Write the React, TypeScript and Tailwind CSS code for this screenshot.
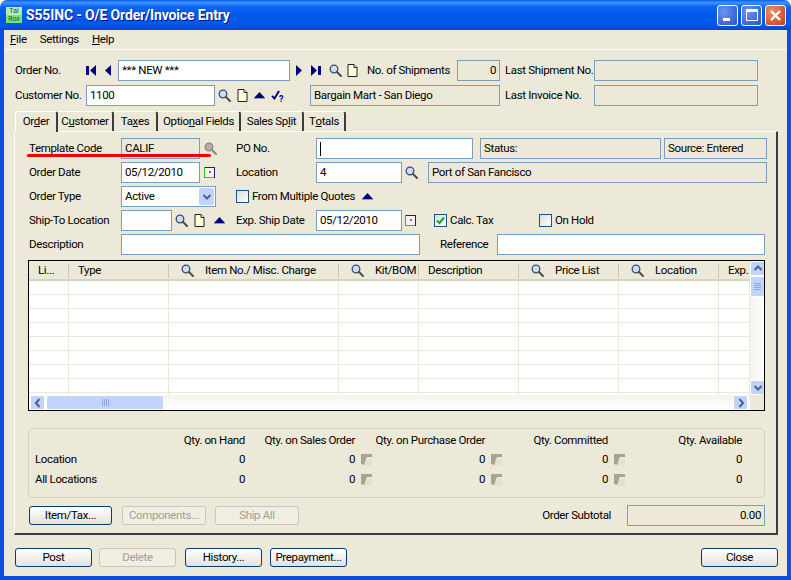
import React from 'react';

const Search = ({ className = '', off = false }: { className?: string; off?: boolean }) => (
  <svg className={`shrink-0 ${className}`} width="13" height="13" viewBox="0 0 13 13">
    <circle cx="5" cy="5" r="3.8" fill={off ? '#b4b2a6' : '#c9dcf8'} stroke={off ? '#8a887c' : '#3d4a66'} strokeWidth="1.3" />
    <path d="M8 8l4 4" stroke={off ? '#8a887c' : '#4b4b4b'} strokeWidth="2" strokeLinecap="round" />
  </svg>
);

const Doc = ({ className = '' }: { className?: string }) => (
  <svg className={`shrink-0 ${className}`} width="11" height="13" viewBox="0 0 11 13">
    <path d="M1 .5h6l3 3v9H1z" fill="#ffffd8" stroke="#222" />
    <path d="M7 .5v3h3" fill="#fff" stroke="#222" />
  </svg>
);

const UpTri = ({ className = '' }: { className?: string }) => (
  <svg className={`shrink-0 ${className}`} width="11" height="7" viewBox="0 0 11 7">
    <path d="M5.5 0l5.5 6H0z" fill="#000080" />
    <path d="M0 6.5h11" stroke="#8f9bb5" />
  </svg>
);

const First = ({ className = '' }: { className?: string }) => (
  <svg className={`shrink-0 ${className}`} width="11" height="11" viewBox="0 0 11 11">
    <path d="M0 1h3v9H0z" fill="#000080" />
    <path d="M10 0v11L4 5.5z" fill="#000080" />
  </svg>
);

const Prev = ({ className = '' }: { className?: string }) => (
  <svg className={`shrink-0 ${className}`} width="7" height="11" viewBox="0 0 7 11">
    <path d="M7 0v11L1 5.5z" fill="#000080" />
  </svg>
);

const Next = ({ className = '' }: { className?: string }) => (
  <svg className={`shrink-0 ${className}`} width="7" height="11" viewBox="0 0 7 11">
    <path d="M0 0v11l6-5.5z" fill="#000080" />
  </svg>
);

const Last = ({ className = '' }: { className?: string }) => (
  <svg className={`shrink-0 ${className}`} width="11" height="11" viewBox="0 0 11 11">
    <path d="M0 0v11l6-5.5z" fill="#000080" />
    <path d="M7 1h3v9H7z" fill="#000080" />
  </svg>
);

const CheckHelp = ({ className = '' }: { className?: string }) => (
  <svg className={`shrink-0 ${className}`} width="13" height="13" viewBox="0 0 13 13">
    <path d="M1 7l2.5 2.5L8 2" fill="none" stroke="#000080" strokeWidth="2" />
    <text x="8" y="12.5" fontSize="9" fontWeight="700" fill="#000080" fontFamily="Roboto, sans-serif">?</text>
  </svg>
);

const Calendar = ({ className = '' }: { className?: string }) => (
  <svg className={`shrink-0 ${className}`} width="11" height="11" viewBox="0 0 11 11">
    <rect x=".5" y=".5" width="10" height="10" fill="#f4f2ee" stroke="#1c1c70" />
    <path d="M.5 0v10.5H10" fill="none" stroke="#22cc22" />
    <rect x="5" y="4" width="2" height="2" fill="#d040a0" />
  </svg>
);

const Drill = () => (
  <svg className="shrink-0" width="11" height="12" viewBox="0 0 11 12">
    <path d="M0 0h11v3H6L5 5v3l-2 3-3-1z" fill="#a8a493" />
    <path d="M5 5h6v7H3z" fill="#e2e0d0" />
  </svg>
);

const Chevron = ({ dir }: { dir: 'up' | 'down' | 'left' | 'right' }) => {
  const d = { up: 'M1.5 6L5 2.5 8.5 6', down: 'M1.5 3L5 6.5 8.5 3', left: 'M6.5 1L3 5l3.5 4', right: 'M3.5 1L7 5 3.5 9' }[dir];
  return (
    <svg width="10" height="10" viewBox="0 0 10 10">
      <path d={d} fill="none" stroke="#4d6185" strokeWidth="2" />
    </svg>
  );
};

const ScrollBtn = ({ dir, className = '' }: { dir: 'up' | 'down' | 'left' | 'right'; className?: string }) => (
  <div className={`flex h-[15px] w-[15px] shrink-0 items-center justify-center rounded-[2px] border border-white bg-[#c1d3fb] ${className}`}>
    <Chevron dir={dir} />
  </div>
);

const Box = ({ className = '', white = false, children }: { className?: string; white?: boolean; children?: React.ReactNode }) => (
  <div className={`flex h-[21px] shrink-0 items-center overflow-hidden whitespace-nowrap border border-[#7f9db9] px-[3px] ${white ? 'bg-white' : ''} ${className}`}>
    {children}
  </div>
);

const Check = ({ checked = false, className = '' }: { checked?: boolean; className?: string }) => (
  <div className={`flex h-[13px] w-[13px] shrink-0 items-center justify-center border border-[#1c5180] bg-gradient-to-br from-[#dcdcd7] to-white ${className}`}>
    {checked && (
      <svg width="9" height="9" viewBox="0 0 9 9">
        <path d="M1 4.5L3.5 7 8 1.5" fill="none" stroke="#21a121" strokeWidth="2" />
      </svg>
    )}
  </div>
);

const Btn = ({ label, off = false, className = 'w-[77px]' }: { label: string; off?: boolean; className?: string }) => (
  <div
    className={`flex h-[19px] shrink-0 items-center justify-center rounded-[3px] border ${
      off ? 'border-[#c9c7ba] bg-[#f0eee2] text-[#a19f91]' : 'border-[#003c74] bg-gradient-to-b from-white to-[#e3e2da] text-black'
    } ${className}`}
  >
    {label}
  </div>
);

const tabs = [
  { before: 'Or', key: 'd', after: 'er', w: 'w-[43px]' },
  { before: 'C', key: 'u', after: 'stomer', w: 'w-[56px]' },
  { before: 'Ta', key: 'x', after: 'es', w: 'w-[44px]' },
  { before: 'Optio', key: 'n', after: 'al Fields', w: 'w-[83px]' },
  { before: 'Sales Sp', key: 'l', after: 'it', w: 'w-[63px]' },
  { before: 'T', key: 'o', after: 'tals', w: 'w-[42px]' },
];

const columns = [
  { w: 'w-[40px]', label: 'Li...', pad: 'pl-[9px]', search: false, sep: true },
  { w: 'w-[100px]', label: 'Type', pad: 'pl-[9px]', search: false, sep: true },
  { w: 'w-[170px]', label: 'Item No./ Misc. Charge', pad: 'pl-[12px]', search: true, sep: true },
  { w: 'w-[80px]', label: 'Kit/BOM', pad: 'pl-[12px]', search: true, sep: true },
  { w: 'w-[100px]', label: 'Description', pad: 'pl-[9px]', search: false, sep: true },
  { w: 'w-[100px]', label: 'Price List', pad: 'pl-[12px]', search: true, sep: true },
  { w: 'w-[100px]', label: 'Location', pad: 'pl-[12px]', search: true, sep: true },
  { w: 'w-[31px]', label: 'Exp.', pad: 'pl-[9px]', search: false, sep: false },
];

const QtyRow = ({ label, vals, h }: { label: string; vals: string[]; h: string }) => (
  <div className={`flex items-center ${h}`}>
    <div className="flex w-[216px] justify-between pl-[6px]">
      <span>{label}</span>
      <span>{vals[0]}</span>
    </div>
    <div className="w-[110px] text-right">{vals[1]}</div>
    <div className="flex w-[17px] justify-end"><Drill /></div>
    <div className="w-[113px] text-right">{vals[2]}</div>
    <div className="flex w-[17px] justify-end"><Drill /></div>
    <div className="w-[106px] text-right">{vals[3]}</div>
    <div className="flex w-[17px] justify-end"><Drill /></div>
    <div className="w-[117px] text-right">{vals[4]}</div>
  </div>
);

const App = () => {
  return (
    <div className="relative flex h-[580px] w-[791px] flex-col overflow-hidden bg-white font-['Roboto',sans-serif] text-[11.5px] leading-none tracking-[-0.35px] text-black">
      {/* Title bar */}
      <div className="flex h-[30px] shrink-0 items-center rounded-t-[7px] bg-[linear-gradient(180deg,#0a5de8_0%,#3d92ff_9%,#0f66f0_22%,#0058e6_50%,#0058e6_82%,#0047cc_100%)] pl-[6px] pr-[5px]">
        <div className="flex h-[16px] w-[16px] shrink-0 flex-col items-center bg-[#7fe08a] text-[7px] leading-[8px] tracking-normal text-[#1c5c2c]">
          <span className="h-[8px] w-full bg-[#b8ecb0] text-center">Tai</span>
          <span>Rox</span>
        </div>
        <span className="ml-[4px] whitespace-nowrap text-[14px] font-bold tracking-[-0.15px] text-white [text-shadow:1px_1px_#0f1089]">
          S55INC - O/E Order/Invoice Entry
        </span>
        <div className="ml-auto flex gap-[3px]">
          <div className="flex h-[21px] w-[21px] items-end rounded-[3px] border border-white bg-[radial-gradient(circle_at_30%_30%,#6d93ee,#2650cf)] pb-[4px] pl-[5px]">
            <div className="h-[3px] w-[7px] bg-white" />
          </div>
          <div className="flex h-[21px] w-[21px] items-center justify-center rounded-[3px] border border-white bg-[radial-gradient(circle_at_30%_30%,#6d93ee,#2650cf)]">
            <div className="h-[12px] w-[12px] border border-t-[3px] border-white" />
          </div>
          <div className="flex h-[21px] w-[21px] items-center justify-center rounded-[3px] border border-white bg-[radial-gradient(circle_at_30%_30%,#e9926d,#c73c12)]">
            <svg width="13" height="13" viewBox="0 0 13 13">
              <path d="M2 2l9 9M11 2l-9 9" stroke="#fff" strokeWidth="2.4" />
            </svg>
          </div>
        </div>
      </div>

      {/* Window body */}
      <div className="flex min-h-0 flex-1 flex-col border-x-[4px] border-b-[4px] border-[#0a50dc] bg-[#ece9d8]">
        {/* Menu */}
        <div className="flex h-[20px] shrink-0 items-center border-b border-white pl-[6px]">
          <span><span className="underline">F</span>ile</span>
          <span className="ml-[13px]">Settin<span className="underline">g</span>s</span>
          <span className="ml-[13px]"><span className="underline">H</span>elp</span>
        </div>

        {/* Header fields */}
        <div className="mt-[10px] flex h-[21px] shrink-0 items-center pl-[11px]">
          <span className="w-[71px] shrink-0">Order No.</span>
          <First />
          <Prev className="ml-[7px]" />
          <Box white className="ml-[7px] w-[172px]">*** NEW ***</Box>
          <Next className="ml-[6px]" />
          <Last className="ml-[8px]" />
          <Search className="ml-[7px]" />
          <Doc className="ml-[5px]" />
          <span className="ml-[9px] w-[90px] shrink-0 whitespace-nowrap">No. of Shipments</span>
          <Box className="w-[43px] justify-end">0</Box>
          <span className="ml-[5px] w-[89px] shrink-0 whitespace-nowrap">Last Shipment No.</span>
          <Box className="w-[164px]" />
        </div>
        <div className="mt-[4px] flex h-[21px] shrink-0 items-center pl-[11px]">
          <span className="w-[71px] shrink-0 whitespace-nowrap">Customer No.</span>
          <Box white className="w-[129px]">1100</Box>
          <Search className="ml-[3px]" />
          <Doc className="ml-[6px]" />
          <UpTri className="ml-[6px]" />
          <CheckHelp className="ml-[6px]" />
          <Box className="ml-[26px] w-[190px]">Bargain Mart - San Diego</Box>
          <span className="ml-[5px] w-[89px] shrink-0 whitespace-nowrap">Last Invoice No.</span>
          <Box className="w-[164px]" />
        </div>

        {/* Tabs */}
        <div className="relative z-10 mt-[5px] flex h-[20px] shrink-0 pl-[11px]">
          {tabs.map((tab, index) => (
            <div
              key={tab.after}
              className={`flex shrink-0 items-center justify-center whitespace-nowrap rounded-tr-[3px] border-r-[2px] border-t border-r-[#3c3c3c] border-t-white ${tab.w} ${
                index === 0 ? 'h-[21px] rounded-tl-[3px] border-l border-l-white bg-[#ece9d8]' : 'h-[20px]'
              }`}
            >
              {tab.before}<span className="underline">{tab.key}</span>{tab.after}
            </div>
          ))}
        </div>

        {/* Tab panel */}
        <div className="ml-[10px] flex h-[404px] w-[764px] shrink-0 flex-col border-b-[2px] border-l border-r-[2px] border-t border-b-[#3c3c3c] border-l-white border-r-[#3c3c3c] border-t-white pl-[13px] pt-[6px]">
          <div className="flex h-[21px] shrink-0 items-center">
            <span className="w-[93px] shrink-0 pl-px">Template Code</span>
            <Box className="w-[79px]">CALIF</Box>
            <Search off className="ml-[4px]" />
            <span className="ml-[19px] w-[80px] shrink-0">PO No.</span>
            <Box white className="w-[157px]"><div className="h-[14px] w-px bg-black" /></Box>
            <Box className="ml-[7px] w-[181px]">Status:</Box>
            <Box className="ml-[3px] w-[103px]">Source: Entered</Box>
          </div>
          <div className="mt-[3px] flex h-[21px] shrink-0 items-center">
            <span className="w-[93px] shrink-0 pl-px">Order Date</span>
            <Box white className="w-[79px]">05/12/2010</Box>
            <Calendar className="ml-[4px]" />
            <span className="ml-[21px] w-[80px] shrink-0">Location</span>
            <Box white className="w-[86px]">4</Box>
            <Search className="ml-[3px]" />
            <Box className="ml-[10px] w-[339px]">Port of San Fancisco</Box>
          </div>
          <div className="mt-[3px] flex h-[21px] shrink-0 items-center">
            <span className="w-[93px] shrink-0 pl-px">Order Type</span>
            <div className="flex h-[21px] w-[95px] shrink-0 items-center justify-between border border-[#7f9db9] bg-white pl-[3px] pr-px">
              Active
              <div className="flex h-[17px] w-[15px] items-center justify-center rounded-[2px] bg-[#c1d3fb]">
                <Chevron dir="down" />
              </div>
            </div>
            <Check className="ml-[20px]" />
            <span className="ml-[3px] w-[110px] shrink-0 whitespace-nowrap">From Multiple Quotes</span>
            <UpTri />
          </div>
          <div className="mt-[3px] flex h-[21px] shrink-0 items-center">
            <span className="w-[93px] shrink-0 pl-px">Ship-To Location</span>
            <Box white className="w-[51px]" />
            <Search className="ml-[3px]" />
            <Doc className="ml-[6px]" />
            <UpTri className="ml-[9px]" />
            <span className="ml-[11px] w-[80px] shrink-0 whitespace-nowrap">Exp. Ship Date</span>
            <Box white className="w-[86px]">05/12/2010</Box>
            <Calendar className="ml-[3px]" />
            <Check checked className="ml-[18px]" />
            <span className="ml-[3px] w-[89px] shrink-0">Calc. Tax</span>
            <Check />
            <span className="ml-[3px]">On Hold</span>
          </div>
          <div className="mt-[3px] flex h-[21px] shrink-0 items-center">
            <span className="w-[93px] shrink-0 pl-px">Description</span>
            <Box white className="w-[299px]" />
            <span className="ml-[20px] w-[57px] shrink-0">Reference</span>
            <Box white className="w-[268px]" />
          </div>

          {/* Grid */}
          <div className="mt-[5px] h-[151px] w-[737px] shrink-0 overflow-hidden border border-black bg-white">
            <div className="flex h-[134px]">
              <div className="w-[721px] shrink-0 overflow-hidden">
                <div className="flex h-[20px] border-b-[2px] border-b-[#d6d3c2] bg-[#ece9d8]">
                  {columns.map((col) => (
                    <div key={col.label} className={`flex shrink-0 items-center whitespace-nowrap pt-px ${col.w} ${col.pad}`}>
                      {col.search && <Search className="mr-[11px]" />}
                      {col.label}
                      {col.sep && <div className="ml-auto h-[14px] w-px shrink-0 bg-[#c8c5b4]" />}
                    </div>
                  ))}
                </div>
                {[0, 1, 2, 3, 4, 5, 6, 7, 8].map((row) => (
                  <div key={row} className="flex h-[14px]">
                    {columns.map((col) => (
                      <div key={col.label} className={`h-[14px] shrink-0 border-b border-r border-[#ece9d8] ${col.w}`} />
                    ))}
                  </div>
                ))}
              </div>
              <div className="flex w-[15px] shrink-0 flex-col justify-between bg-gradient-to-r from-[#f4f3ee] to-white">
                <div>
                  <ScrollBtn dir="up" />
                  <div className="flex h-[21px] w-[15px] flex-col items-center justify-center gap-px rounded-[2px] border border-white bg-[#c1d3fb]">
                    <div className="h-px w-[7px] bg-[#8aa6e6]" />
                    <div className="h-px w-[7px] bg-[#8aa6e6]" />
                    <div className="h-px w-[7px] bg-[#8aa6e6]" />
                    <div className="h-px w-[7px] bg-[#8aa6e6]" />
                  </div>
                </div>
                <ScrollBtn dir="down" />
              </div>
            </div>
            <div className="flex h-[15px]">
              <div className="flex w-[721px] shrink-0 items-center bg-gradient-to-b from-[#f4f3ee] to-white pl-px">
                <ScrollBtn dir="left" />
                <div className="ml-px flex h-[15px] w-[118px] items-center justify-center gap-px rounded-[2px] border border-white bg-[#c1d3fb]">
                  <div className="h-[7px] w-px bg-[#8aa6e6]" />
                  <div className="h-[7px] w-px bg-[#8aa6e6]" />
                  <div className="h-[7px] w-px bg-[#8aa6e6]" />
                  <div className="h-[7px] w-px bg-[#8aa6e6]" />
                </div>
                <ScrollBtn dir="right" className="ml-auto mr-[2px]" />
              </div>
              <div className="flex-1 bg-[#ece9d8]" />
            </div>
          </div>

          {/* Quantities */}
          <div className="mt-[17px] h-[70px] w-[737px] shrink-0 rounded-[5px] border border-[#d0d0bf] pt-[3px]">
            <div className="flex h-[18px] items-center whitespace-nowrap">
              <div className="w-[216px] text-right">Qty. on Hand</div>
              <div className="w-[110px] text-right">Qty. on Sales Order</div>
              <div className="w-[130px] text-right">Qty. on Purchase Order</div>
              <div className="w-[123px] text-right">Qty. Committed</div>
              <div className="w-[134px] text-right">Qty. Available</div>
            </div>
            <QtyRow label="Location" vals={['0', '0', '0', '0', '0']} h="h-[19px]" />
            <QtyRow label="All Locations" vals={['0', '0', '0', '0', '0']} h="h-[21px]" />
          </div>

          {/* Item buttons and subtotal */}
          <div className="mt-[7px] flex h-[21px] w-[737px] shrink-0 items-center pl-px">
            <Btn label="Item/Tax..." className="w-[83px]" />
            <Btn label="Components..." off className="ml-[10px] w-[84px]" />
            <Btn label="Ship All" off className="ml-[9px] w-[84px]" />
            <span className="ml-auto mr-[16px]">Order Subtotal</span>
            <Box className="w-[138px] justify-end">0.00</Box>
          </div>
        </div>

        {/* Bottom buttons */}
        <div className="mt-[13px] flex shrink-0 pl-[11px] pr-[9px]">
          <Btn label="Post" />
          <Btn label="Delete" off className="ml-[7px] w-[77px]" />
          <Btn label="History..." className="ml-[9px] w-[77px]" />
          <Btn label="Prepayment..." className="ml-[8px] w-[77px]" />
          <Btn label="Close" className="ml-auto w-[77px]" />
        </div>
      </div>

      {/* red annotation under Template Code */}
      <div className="absolute left-[27px] top-[154px] h-[3px] w-[184px] rounded-full bg-[#f00000]" />
    </div>
  );
};

export default App;
